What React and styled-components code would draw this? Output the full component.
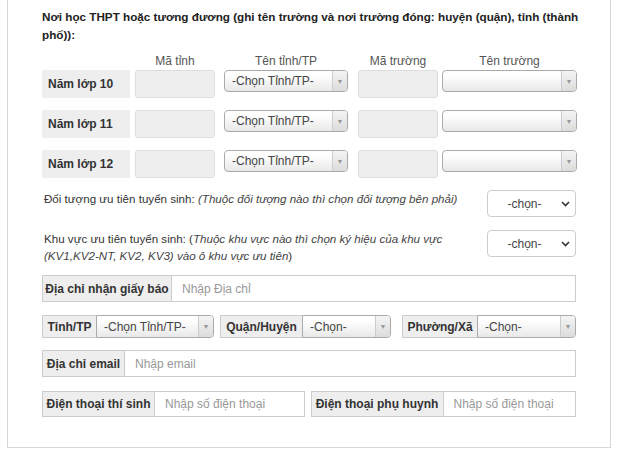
import React from 'react';
import styled, { createGlobalStyle } from 'styled-components';

const GlobalStyle = createGlobalStyle`
  body {
    margin: 0;
    background: #fff;
    font-family: "Liberation Sans", Arial, sans-serif;
    color: #333;
  }
`;

const Panel = styled.div`
  margin-left: 7px;
  width: 604px;
  border: 1px solid #d6d6d6;
  border-top: none;
  padding: 8px 34px 30px 34px;
  box-sizing: border-box;
  display: flex;
  flex-direction: column;
`;

const Heading = styled.div`
  font-size: 11.7px;
  font-weight: bold;
  line-height: 18px;
  color: #222;
  white-space: nowrap;
`;

const SchoolGrid = styled.div`
  margin-top: 9px;
  display: grid;
  grid-template-columns: 93px 89px 134px 84px 135px;
  row-gap: 12px;
`;

const ColHead = styled.div`
  font-size: 12px;
  color: #555;
  line-height: 16px;
  text-align: center;
  width: ${p => p.w}px;
  margin-bottom: -11px;
`;

const YearLabel = styled.div`
  width: 88px;
  height: 28px;
  background: #eee;
  font-size: 12px;
  font-weight: bold;
  display: flex;
  align-items: center;
  padding-left: 6px;
  box-sizing: border-box;
`;

const ReadBox = styled.div`
  width: 80px;
  height: 28px;
  background: #eee;
  border: 1px solid #ddd;
  border-radius: 3px;
  box-sizing: border-box;
`;

const ChosenWrap = styled.div`
  width: ${p => p.w}px;
  height: ${p => p.h || 22}px;
  border: 1px solid #aaa;
  border-radius: ${p => (p.flat ? '0 4px 4px 0' : '4px')};
  background: linear-gradient(#fff 20%, #f4f4f4 60%, #e8e8e8);
  box-sizing: border-box;
  display: flex;
  align-items: stretch;
  font-size: 12px;
  color: #444;
  overflow: hidden;
`;

const ChosenText = styled.span`
  flex: 1;
  display: flex;
  align-items: center;
  padding-left: 7px;
  white-space: nowrap;
`;

const ChosenArrow = styled.span`
  width: 14px;
  border-left: 1px solid #ccc;
  background: linear-gradient(#f4f4f4, #dcdcdc);
  display: flex;
  align-items: center;
  justify-content: center;
  color: #999;
  font-size: 7px;
`;

const Chosen = ({ w, h, flat, text }) => (
  <ChosenWrap w={w} h={h} flat={flat}>
    <ChosenText>{text}</ChosenText>
    <ChosenArrow>▼</ChosenArrow>
  </ChosenWrap>
);

const PriorityRow = styled.div`
  margin-top: ${p => p.mt}px;
  display: flex;
  justify-content: space-between;
  align-items: flex-start;
`;

const PriorityText = styled.div`
  width: 428px;
  margin-left: 2px;
  font-size: 11.6px;
  line-height: 17px;
  color: #333;
`;

const Note = styled.span`
  font-style: italic;
  color: #444;
`;

const NativeSelect = styled.div`
  width: 89px;
  height: 27px;
  border: 1px solid #ccc;
  border-radius: 4px;
  box-sizing: border-box;
  display: flex;
  align-items: center;
  justify-content: space-between;
  padding: 0 5px 0 0;
  font-size: 12px;
  color: #444;

  span {
    flex: 1;
    text-align: center;
  }
`;

const Group = styled.div`
  margin-top: ${p => p.mt || 0}px;
  width: ${p => (p.w ? p.w + 'px' : '100%')};
  height: ${p => p.h || 27}px;
  display: flex;
  justify-content: ${p => (p.end ? 'flex-end' : 'flex-start')};
  box-sizing: border-box;
`;

const GroupLabel = styled.div`
  width: ${p => p.w}px;
  flex-shrink: 0;
  background: #eee;
  border: 1px solid #ccc;
  border-right: ${p => (p.joined ? 'none' : '1px solid #ccc')};
  box-sizing: border-box;
  font-size: 12px;
  font-weight: bold;
  color: #333;
  display: flex;
  align-items: center;
  justify-content: center;
  white-space: nowrap;
`;

const GroupInput = styled.div`
  flex: 1;
  border: 1px solid #ccc;
  border-left: none;
  box-sizing: border-box;
  font-size: 12px;
  color: #999;
  display: flex;
  align-items: center;
  padding-left: 10px;
`;

const Line = styled.div`
  margin-top: ${p => p.mt}px;
  display: flex;
  gap: ${p => p.gap}px;
`;

const Chevron = () => (
  <svg width="9" height="6" viewBox="0 0 9 6">
    <path d="M1 1l3.5 3.5L8 1" fill="none" stroke="#333" strokeWidth="1.6" />
  </svg>
);

const years = ['Năm lớp 10', 'Năm lớp 11', 'Năm lớp 12'];

export default function App() {
  return (
    <>
      <GlobalStyle />
      <Panel>
        <Heading>
          Nơi học THPT hoặc tương đương (ghi tên trường và nơi trường đóng: huyện (quận), tỉnh (thành
          <br />
          phố)):
        </Heading>
        <SchoolGrid>
          <div />
          <ColHead w={80}>Mã tỉnh</ColHead>
          <ColHead w={124}>Tên tỉnh/TP</ColHead>
          <ColHead w={80}>Mã trường</ColHead>
          <ColHead w={135}>Tên trường</ColHead>
          {years.map(y => (
            <React.Fragment key={y}>
              <YearLabel>{y}</YearLabel>
              <ReadBox />
              <Chosen w={124} text="-Chọn Tỉnh/TP-" />
              <ReadBox />
              <Chosen w={135} text="" />
            </React.Fragment>
          ))}
        </SchoolGrid>
        <PriorityRow mt={12}>
          <PriorityText>
            Đối tượng ưu tiên tuyển sinh: <Note>(Thuộc đối tượng nào thì chọn đối tượng bên phải)</Note>
          </PriorityText>
          <NativeSelect><span>-chọn-</span><Chevron /></NativeSelect>
        </PriorityRow>
        <PriorityRow mt={13}>
          <PriorityText>
            Khu vực ưu tiên tuyển sinh: (<Note>Thuộc khu vực nào thì chọn ký hiệu của khu vực</Note>
            <br />
            <Note>(KV1,KV2-NT, KV2, KV3) vào ô khu vực ưu tiên</Note>)
          </PriorityText>
          <NativeSelect><span>-chọn-</span><Chevron /></NativeSelect>
        </PriorityRow>
        <Group mt={11}>
          <GroupLabel w={130}>Địa chỉ nhận giấy báo</GroupLabel>
          <GroupInput>Nhập Địa chỉ</GroupInput>
        </Group>
        <Line mt={13} gap={6}>
          <Group w={172} h={23}>
            <GroupLabel w={54} joined>Tỉnh/TP</GroupLabel>
            <Chosen w={118} h={23} flat text="-Chọn Tỉnh/TP-" />
          </Group>
          <Group w={171} h={23}>
            <GroupLabel w={82} joined>Quận/Huyện</GroupLabel>
            <Chosen w={89} h={23} flat text="-Chọn-" />
          </Group>
          <Group w={186} h={23} end>
            <GroupLabel w={75} joined>Phường/Xã</GroupLabel>
            <Chosen w={99} h={23} flat text="-Chọn-" />
          </Group>
        </Line>
        <Group mt={12}>
          <GroupLabel w={83}>Địa chỉ email</GroupLabel>
          <GroupInput>Nhập email</GroupInput>
        </Group>
        <Line mt={14} gap={6}>
          <Group w={263} h={26}>
            <GroupLabel w={113}>Điện thoại thí sinh</GroupLabel>
            <GroupInput>Nhập số điện thoại</GroupInput>
          </Group>
          <Group w={266} h={26}>
            <GroupLabel w={133}>Điện thoại phụ huynh</GroupLabel>
            <GroupInput>Nhập số điện thoại</GroupInput>
          </Group>
        </Line>
      </Panel>
    </>
  );
}
